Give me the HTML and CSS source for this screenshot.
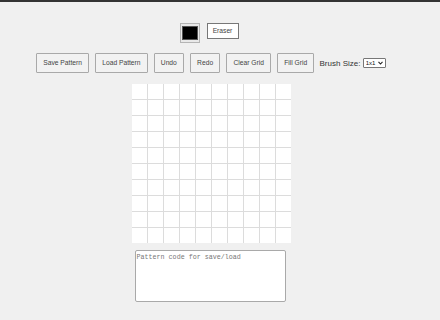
FILE: index.html
```html
<!DOCTYPE html>
<html lang="en">
<head>
  <meta charset="UTF-8">
  <title>Pixel Pattern Maker</title>
  <link rel="stylesheet" href="styles.css">
</head>
<body>
  <div class="app">
    <div class="tools">
      <input type="color" class="color-pick" value="#000000">
      <button class="eraser">Eraser</button>
    </div>

    <div class="controls">
      <button class="btn">Save Pattern</button>
      <button class="btn">Load Pattern</button>
      <button class="btn">Undo</button>
      <button class="btn">Redo</button>
      <button class="btn">Clear Grid</button>
      <button class="btn">Fill Grid</button>
      <label class="brush-label">Brush Size:</label>
      <span class="brush-wrap">
        <select class="brush">
          <option>1x1</option>
          <option>2x2</option>
          <option>3x3</option>
        </select>
        <svg class="brush-arrow" width="5" height="4" viewBox="0 0 5 4"><path d="M0.5 0.8 L2.5 3 L4.5 0.8" fill="none" stroke="#222" stroke-width="1.1"/></svg>
      </span>
    </div>

    <div class="grid" id="grid"></div>

    <textarea class="code" placeholder="Pattern code for save/load"></textarea>
  </div>

  <script>
    const grid = document.getElementById('grid');
    for (let i = 0; i < 100; i++) {
      const cell = document.createElement('div');
      cell.className = 'cell';
      grid.appendChild(cell);
    }
  </script>
</body>
</html>
```

FILE: styles.css
```css
* {
  box-sizing: border-box;
}
body {
  margin: 0;
  padding: 0;
  background: #f0f0f0;
  border-top: 2px solid #333;
  font-family: 'Liberation Sans', Arial, sans-serif;
  font-size: 8px;
  color: #333;
  height: 100vh;
  overflow: hidden;
}

.app {
  display: flex;
  flex-direction: column;
  align-items: center;
  padding: 21px 18px 0 0;
}

.tools {
  display: flex;
  align-items: flex-start;
  gap: 7px;
  height: 20px;
  margin-left: -4px;
}

.color-pick {
  width: 20px;
  height: 20px;
  padding: 2px 1px;
  margin: 0;
  border: 1px solid #b5b5b5;
  background: #e9e9e9;
  cursor: pointer;
}
.color-pick::-webkit-color-swatch-wrapper {
  padding: 0;
}
.color-pick::-webkit-color-swatch {
  border: 1px solid #555;
}

.eraser {
  font-family: inherit;
  font-size: 6.7px;
  line-height: 8px;
  width: 32px;
  padding: 3px 0;
  margin: 0;
  background: #fff;
  border: 1px solid #777;
  color: #444;
  cursor: pointer;
}

.controls {
  display: flex;
  align-items: center;
  gap: 6.3px;
  margin-top: 10px;
}

.btn {
  font-family: inherit;
  font-size: 6.7px;
  line-height: 8px;
  padding: 5px 6px;
  margin: 0;
  background: #f2f2f2;
  border: 1px solid #a9a9a9;
  border-radius: 1px;
  color: #444;
  cursor: pointer;
}

.brush-label {
  margin-left: -1px;
  font-size: 8px;
}

.brush-wrap {
  position: relative;
  margin-left: -4px;
  display: flex;
}

.brush {
  -webkit-appearance: none;
  appearance: none;
  font-family: inherit;
  font-size: 6px;
  line-height: 7px;
  height: 10px;
  width: 23px;
  padding: 0 0 0 2px;
  border: 1px solid #777;
  border-radius: 1px;
  background: #fff;
  color: #111;
}

.brush-arrow {
  position: absolute;
  right: 3px;
  top: 3px;
  pointer-events: none;
}

.grid {
  display: grid;
  grid-template-columns: repeat(10, 15px);
  grid-auto-rows: 15px;
  gap: 1px;
  background: #dcdcdc;
  margin-top: 11px;
}

.cell {
  background: #fff;
}

.code {
  margin-top: 7px;
  margin-left: -2px;
  width: 151px;
  height: 52px;
  padding: 2px 1px;
  font-family: 'Liberation Mono', monospace;
  font-size: 6.7px;
  border: 1px solid #a9a9a9;
  border-radius: 2px;
  background: #fff;
  resize: none;
}
.code::placeholder {
  color: #777;
}
```
